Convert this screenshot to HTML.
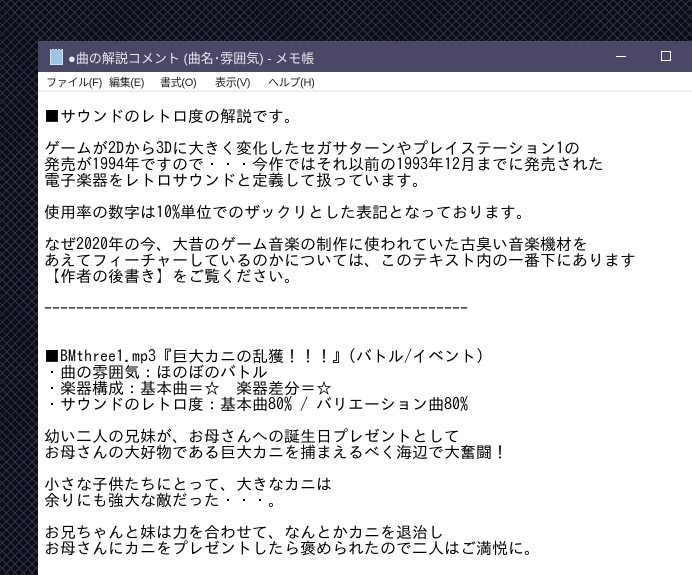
<!DOCTYPE html>
<html><head><meta charset="utf-8"><style>
html,body{margin:0;padding:0;width:692px;height:575px;overflow:hidden}
body{background-color:#0b0d18;background-image:repeating-linear-gradient(45deg,#2e3444 0 1px,transparent 1px 6px),repeating-linear-gradient(-45deg,#2e3444 0 1px,transparent 1px 6px);position:relative}
.win{position:absolute;left:38px;top:41px;width:654px;height:534px;background:#fff}
.title{height:31px;background:#4b4767;color:#e8e6f0;font:13px "Liberation Sans","Noto Sans CJK JP",sans-serif;position:relative}
.title .t{position:absolute;left:30px;top:7px}
.icon{position:absolute;left:12px;top:8px;width:11px;height:14px;background:#9fc4e6;border:1px solid #cfe3f5}
.icon:before{content:"";position:absolute;left:0;right:0;top:-2px;height:2px;background:repeating-linear-gradient(90deg,#555 0 1px,transparent 1px 3px)}
.min{position:absolute;left:578px;top:15px;width:10px;height:1px;background:#fff}
.max{position:absolute;left:623px;top:10px;width:8px;height:8px;border:1px solid #fff}
.menu{height:18px;font:11px "Liberation Sans","Noto Sans CJK JP",sans-serif;color:#222;border-bottom:2px solid #eee;position:relative;letter-spacing:-0.3px}
.menu span{position:absolute;top:2px}
pre{margin:0;padding:0 0 0 6px;position:absolute;top:67px;left:0;font:16px/16px "IPAGothic","Noto Sans CJK JP",monospace;color:#000}
</style></head><body>
<div class="win">
<div class="title"><div class="icon"></div><span class="t">●曲の解説コメント (曲名･雰囲気) - メモ帳</span><div class="min"></div><div class="max"></div></div>
<div class="menu"><span style="left:8px">ファイル(F)</span><span style="left:71px">編集(E)</span><span style="left:122px">書式(O)</span><span style="left:177px">表示(V)</span><span style="left:230px">ヘルプ(H)</span></div>
<pre>■サウンドのレトロ度の解説です。

ゲームが2Dから3Dに大きく変化したセガサターンやプレイステーション1の
発売が1994年ですので・・・今作ではそれ以前の1993年12月までに発売された
電子楽器をレトロサウンドと定義して扱っています。

使用率の数字は10%単位でのザックリとした表記となっております。

なぜ2020年の今、大昔のゲーム音楽の制作に使われていた古臭い音楽機材を
あえてフィーチャーしているのかについては、このテキスト内の一番下にあります
【作者の後書き】をご覧ください。

-----------------------------------------------------


■BMthree1.mp3『巨大カニの乱獲！！！』(バトル/イベント)
・曲の雰囲気：ほのぼのバトル
・楽器構成：基本曲＝☆　楽器差分＝☆
・サウンドのレトロ度：基本曲80% / バリエーション曲80%

幼い二人の兄妹が、お母さんへの誕生日プレゼントとして
お母さんの大好物である巨大カニを捕まえるべく海辺で大奮闘！

小さな子供たちにとって、大きなカニは
余りにも強大な敵だった・・・。

お兄ちゃんと妹は力を合わせて、なんとかカニを退治し
お母さんにカニをプレゼントしたら褒められたので二人はご満悦に。</pre>
</div>
</body></html>
